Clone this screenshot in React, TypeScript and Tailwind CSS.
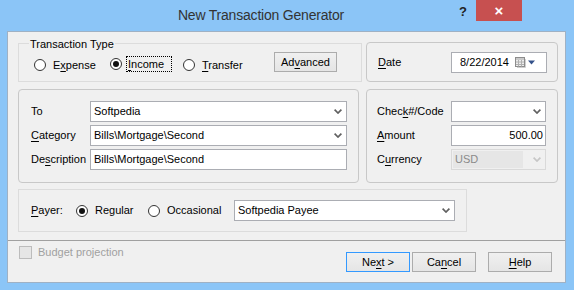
import React from "react";

const Chevron = ({ disabled }: { disabled?: boolean }) => (
  <svg width="8" height="5" viewBox="0 0 8 5">
    <path
      d="M0.6 0.6 L4 4 L7.4 0.6"
      fill="none"
      stroke={disabled ? "#c6c6c6" : "#606060"}
      strokeWidth="1.7"
    />
  </svg>
);

const Radio = ({ checked }: { checked?: boolean }) => (
  <span className="w-[12px] h-[12px] rounded-full border border-[#333] bg-white flex items-center justify-center shrink-0">
    {checked && <span className="w-[6px] h-[6px] rounded-full bg-[#111]" />}
  </span>
);

const U = ({ children }: { children: React.ReactNode }) => (
  <span className="underline underline-offset-[2px]">{children}</span>
);

const Combo = ({
  text,
  width,
  disabled,
}: {
  text: string;
  width: string;
  disabled?: boolean;
}) => (
  <div
    className={`${width} h-[21px] flex items-center justify-between border pl-[3px] pr-[4px] ${
      disabled
        ? "border-[#d9d9d9] bg-[#f0f0f0] text-[#8a8a8a]"
        : "border-[#abadb3] bg-white"
    }`}
  >
    {disabled ? (
      <div className="flex-1 h-[17px] -ml-[2px] mr-[10px] bg-[#e6e6e6] flex items-center pl-[2px]">
        {text}
      </div>
    ) : (
      <span>{text}</span>
    )}
    <Chevron disabled={disabled} />
  </div>
);

const Button = ({
  children,
  primary,
}: {
  children: React.ReactNode;
  primary?: boolean;
}) => (
  <div
    className={`w-[64px] h-[20px] flex items-center justify-center border bg-gradient-to-b from-[#f0f0f0] to-[#e5e5e5] ${
      primary ? "border-[#3399ff]" : "border-[#acacac]"
    }`}
  >
    {children}
  </div>
);

export default function App() {
  return (
    <div className="w-[574px] h-[290px] bg-[#8bc5f7] flex flex-col font-['Liberation_Sans',Arial,sans-serif] text-[11px] leading-[13px] text-black">
      {/* title bar */}
      <div className="h-[31px] flex relative">
        <div className="flex-1 text-center pt-[7px] text-[14px] leading-[16px] tracking-[-0.2px] text-[#333]">
          New Transaction Generator
        </div>
        <div className="w-[52px]" />
        <div className="absolute top-0 right-[52px] flex items-start">
          <span className="mt-[5px] mr-[9px] text-[13px] font-bold text-[#222]">?</span>
          <div className="w-[46px] h-[21px] bg-[#c75050] flex items-center justify-center text-white text-[15px] font-bold">
            ×
          </div>
        </div>
      </div>

      {/* client */}
      <div className="ml-[7px] w-[559px] h-[252px] border border-[#9fb1c4] bg-[#f0f0f0] flex flex-col">
        <div className="h-[209px] border-b border-[#a0a0a0] pl-[10px] pt-[10px] flex flex-col">
          {/* row 1 */}
          <div className="flex gap-[4px] h-[40px]">
            <div className="relative w-[344px] h-[39px] mt-[1px] border border-[#dcdcdc] flex items-start pl-[15px] pt-[8px]">
              <span className="absolute -top-[6px] left-[10px] bg-[#f0f0f0] px-[1px]">
                Transaction Type
              </span>
              <div className="w-[76px] mt-[5px] h-[16px] flex items-center">
                <Radio />
                <span className="ml-[7px]">
                  E<U>x</U>pense
                </span>
              </div>
              <div className="w-[73px] mt-[4px] h-[16px] flex items-center">
                <Radio checked />
                <span className="ml-[4px] border border-dotted border-black h-[16px] pl-[1px] pr-[7px] flex items-center">
                  <U>I</U>ncome
                </span>
              </div>
              <div className="w-[91px] mt-[5px] h-[16px] flex items-center">
                <Radio />
                <span className="ml-[7px]">
                  <U>T</U>ransfer
                </span>
              </div>
              <div className="w-[63px] h-[20px] flex items-center justify-center border border-[#acacac] bg-gradient-to-b from-[#f0f0f0] to-[#e5e5e5]">
                Ad<U>v</U>anced
              </div>
            </div>
            <div className="w-[192px] h-[40px] rounded-[4px] border border-[#c8c8c8] flex items-start pl-[11px] pt-[9px]">
              <span className="w-[73px] h-[21px] flex items-center">
                <U>D</U>ate
              </span>
              <div className="w-[96px] h-[21px] border border-[#abadb3] bg-white flex items-center pl-[8px]">
                <span>8/22/2014</span>
                <svg width="11" height="11" viewBox="0 0 11 11" className="ml-[6px]">
                  <rect x="0.5" y="0.5" width="9" height="9" fill="#ededed" stroke="#8c8c8c" />
                  <rect x="1" y="1" width="8" height="2" fill="#c9c9c9" />
                  <path d="M1 5 H9 M1 7.5 H9 M3.5 3 V9.5 M6.5 3 V9.5" stroke="#b0b0b0" strokeWidth="1" />
                  <path d="M10.5 2 V10.5 H2" stroke="#cfcfcf" fill="none" />
                </svg>
                <svg width="8" height="5" viewBox="0 0 8 5" className="ml-[2px]">
                  <polygon points="0,0.5 7,0.5 3.5,4.5" fill="#34528a" />
                </svg>
              </div>
            </div>
          </div>

          {/* row 2 */}
          <div className="flex gap-[7px] h-[94px] mt-[7px]">
            <div className="w-[341px] h-[94px] rounded-[4px] border border-[#c8c8c8] pl-[12px] pt-[11px] flex flex-col gap-[3px]">
              <div className="flex items-center">
                <span className="w-[59px]">To</span>
                <Combo text="Softpedia" width="w-[257px]" />
              </div>
              <div className="flex items-center">
                <span className="w-[59px]">
                  <U>C</U>ategory
                </span>
                <Combo text="Bills\Mortgage\Second" width="w-[257px]" />
              </div>
              <div className="flex items-center">
                <span className="w-[59px]">
                  De<U>s</U>cription
                </span>
                <div className="w-[257px] h-[21px] border border-[#abadb3] bg-white flex items-center pl-[3px]">
                  Bills\Mortgage\Second
                </div>
              </div>
            </div>
            <div className="w-[192px] h-[94px] rounded-[4px] border border-[#c8c8c8] pl-[10px] pt-[11px] flex flex-col gap-[3px]">
              <div className="flex items-center">
                <span className="w-[74px]">
                  Chec<U>k</U>#/Code
                </span>
                <Combo text="" width="w-[95px]" />
              </div>
              <div className="flex items-center">
                <span className="w-[74px]">
                  <U>A</U>mount
                </span>
                <div className="w-[95px] h-[21px] border border-[#abadb3] bg-white flex items-center justify-end pr-[2px]">
                  500.00
                </div>
              </div>
              <div className="flex items-center">
                <span className="w-[74px]">
                  C<U>u</U>rrency
                </span>
                <Combo text="USD" width="w-[95px]" disabled />
              </div>
            </div>
          </div>

          {/* row 3 */}
          <div className="mt-[6px] w-[449px] h-[43px] border border-[#dcdcdc] flex items-start pl-[12px] pt-[10px]">
            <span className="w-[45px] h-[21px] flex items-center">
              <U>P</U>ayer:
            </span>
            <div className="w-[72px] h-[21px] flex items-center">
              <Radio checked />
              <span className="ml-[7px]">Regular</span>
            </div>
            <div className="w-[86px] h-[21px] flex items-center">
              <Radio />
              <span className="ml-[7px]">Occasional</span>
            </div>
            <Combo text="Softpedia Payee" width="w-[221px]" />
          </div>
        </div>

        {/* bottom */}
        <div className="flex-1 flex items-start pl-[11px] pr-[13px]">
          <div className="mt-[5px] flex items-center text-[#a0a0a0]">
            <span className="w-[13px] h-[13px] border border-[#bcbcbc] bg-[#e6e6e6]" />
            <span className="ml-[6px]">Budget projection</span>
          </div>
          <div className="ml-auto mt-[11px] flex">
            <Button primary>
              Ne<U>x</U>t &gt;
            </Button>
            <div className="ml-[2px]">
              <Button>
                Ca<U>n</U>cel
              </Button>
            </div>
            <div className="ml-[12px]">
              <Button>
                <U>H</U>elp
              </Button>
            </div>
          </div>
        </div>
      </div>
    </div>
  );
}
